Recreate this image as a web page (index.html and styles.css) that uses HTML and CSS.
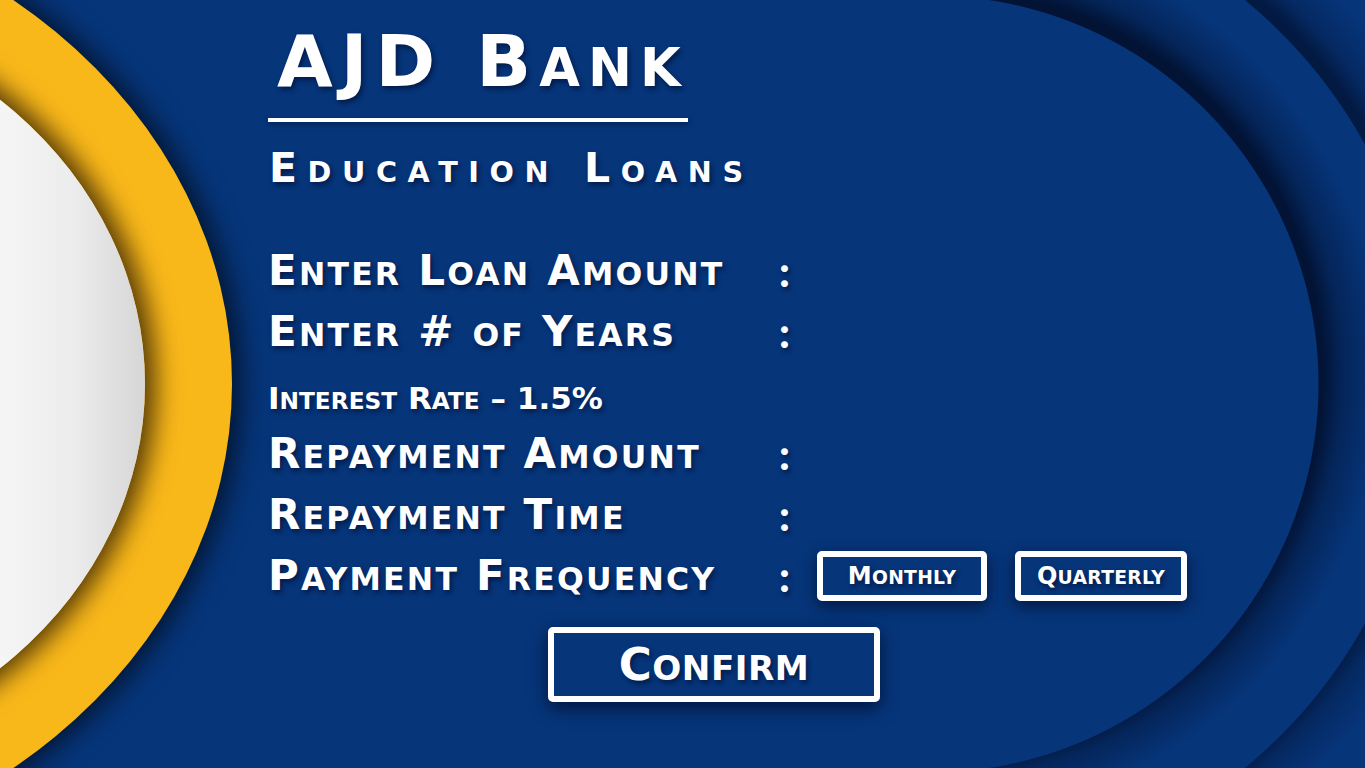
FILE: index.html
```html
<!DOCTYPE html>
<html lang="en">
<head>
<meta charset="utf-8">
<title>AJD Bank – Education Loans</title>
<link rel="stylesheet" href="styles.css">
</head>
<body>
<div class="screen">
  <div class="deco deco-ring" aria-hidden="true"></div>
  <div class="deco deco-disc" aria-hidden="true"></div>
  <div class="deco deco-arcs" aria-hidden="true"></div>

  <main class="content">
    <h1 class="bank">AJD B<span class="sc">ank</span></h1>
    <div class="rule"></div>
    <h2 class="subtitle">E<span class="sc">ducation</span> L<span class="sc">oans</span></h2>

    <div class="form">
      <div class="row"><span class="label">E<span class="sc">nter</span> L<span class="sc">oan</span> A<span class="sc">mount</span></span><span class="colon">:</span></div>
      <div class="row"><span class="label">E<span class="sc">nter</span> # <span class="sc">of</span> Y<span class="sc">ears</span></span><span class="colon">:</span></div>
      <div class="row"><span class="label label-small">I<span class="sc">nterest</span> R<span class="sc">ate</span> – 1.5%</span></div>
      <div class="row"><span class="label">R<span class="sc">epayment</span> A<span class="sc">mount</span></span><span class="colon">:</span></div>
      <div class="row"><span class="label">R<span class="sc">epayment</span> T<span class="sc">ime</span></span><span class="colon">:</span></div>
      <div class="row"><span class="label">P<span class="sc">ayment</span> F<span class="sc">requency</span></span><span class="colon">:</span>
        <div class="options">
          <button class="opt opt-monthly">M<span class="sc">onthly</span></button>
          <button class="opt opt-quarterly">Q<span class="sc">uarterly</span></button>
        </div>
      </div>
    </div>

    <button class="confirm">C<span class="sc">onfirm</span></button>
  </main>
</div>
</body>
</html>
```

FILE: styles.css
```css
html, body {
  margin: 0;
  padding: 0;
}

body {
  background: #06357a;
  font-family: "DejaVu Sans", "Liberation Sans", sans-serif;
  color: #fff;
}

.screen {
  position: relative;
  width: 1365px;
  height: 768px;
  overflow: hidden;
  background: #06357a;
}

/* decorative background shapes */
.deco {
  position: absolute;
  pointer-events: none;
}

.deco-ring {
  left: -972px;
  top: -114px;
  width: 1204px;
  height: 996px;
  border-radius: 50%;
  background: #f9b81a;
  box-shadow: 4px 0 28px 4px rgba(0, 0, 0, 0.65);
}

.deco-disc {
  left: -745px;
  top: -1px;
  width: 890px;
  height: 770px;
  border-radius: 50%;
  background: linear-gradient(90deg, #f5f5f5 84%, #ececec 92%, #d6d6d6 100%);
  box-shadow: 4px 0 26px 6px rgba(20, 10, 0, 0.75);
}

.deco-arcs {
  left: 930px;
  top: 0;
  width: 435px;
  height: 768px;
  background:
    radial-gradient(circle at 0 384px, #06357a 388px, rgba(6, 53, 122, 0) 389px),
    radial-gradient(circle at 8px 372px, rgba(0, 8, 30, 0.75) 384px, rgba(0, 8, 30, 0.35) 405px, rgba(0, 8, 30, 0) 445px),
    radial-gradient(circle at 0 384px, #06357a 496px, rgba(6, 53, 122, 0) 497px),
    radial-gradient(circle at 8px 372px, rgba(0, 8, 30, 0.6) 492px, rgba(0, 8, 30, 0.25) 512px, rgba(0, 8, 30, 0) 550px);
}

/* content */
.content {
  position: relative;
  z-index: 1;
  padding: 25px 0 0 268px;
  display: flex;
  flex-direction: column;
  align-items: flex-start;
}

.bank,
.subtitle,
.label,
.colon,
.opt,
.confirm {
  font-weight: bold;
  text-shadow: 2px 3px 5px rgba(0, 10, 40, 0.6);
}

/* hand-set small capitals */
.sc {
  text-transform: uppercase;
  font-size: 0.75em;
  line-height: 0;
}

.bank {
  margin: 0 0 0 9px;
  font-size: 72px;
  line-height: 72px;
  letter-spacing: 8px;
}

.bank .sc {
  font-size: 0.73em;
}

.rule {
  width: 420px;
  height: 4px;
  margin-top: 21px;
  background: #fff;
  box-shadow: 1px 2px 5px rgba(0, 10, 40, 0.5);
}

.subtitle {
  margin: 26px 0 0 1px;
  font-size: 41px;
  line-height: 41px;
  letter-spacing: 10.6px;
}

.subtitle .sc {
  font-size: 0.7em;
}

.form {
  margin-top: 51px;
  display: flex;
  flex-direction: column;
}

.row {
  height: 61px;
  display: flex;
  align-items: center;
}

.label {
  width: 511px;
  flex: none;
  font-size: 42px;
  letter-spacing: 2.2px;
  white-space: nowrap;
}

.label-small {
  font-size: 31px;
  letter-spacing: 0;
  padding-top: 10px;
}

.colon {
  width: 20px;
  font-family: Lato, "DejaVu Sans", sans-serif;
  font-weight: 900;
  font-size: 42px;
}

.options {
  display: flex;
  gap: 28px;
  margin-left: 18px;
}

.opt {
  box-sizing: border-box;
  height: 50px;
  padding: 0;
  border: 6px solid #fff;
  border-radius: 5px;
  background: #06357a;
  color: #fff;
  font-family: inherit;
  font-size: 24px;
  letter-spacing: 0.3px;
  box-shadow: 0 5px 16px rgba(0, 5, 25, 0.6);
}

.opt .sc {
  font-size: 0.78em;
}

.opt-monthly {
  width: 170px;
}

.opt-quarterly {
  width: 172px;
}

.confirm {
  box-sizing: border-box;
  width: 332px;
  height: 75px;
  margin: 21px 0 0 280px;
  padding: 0;
  border: 6px solid #fff;
  border-radius: 5px;
  background: #06357a;
  color: #fff;
  font-family: inherit;
  font-size: 45px;
  letter-spacing: 0.5px;
  box-shadow: 0 6px 18px rgba(0, 5, 25, 0.65);
}

.confirm .sc {
  font-size: 0.76em;
}
```
